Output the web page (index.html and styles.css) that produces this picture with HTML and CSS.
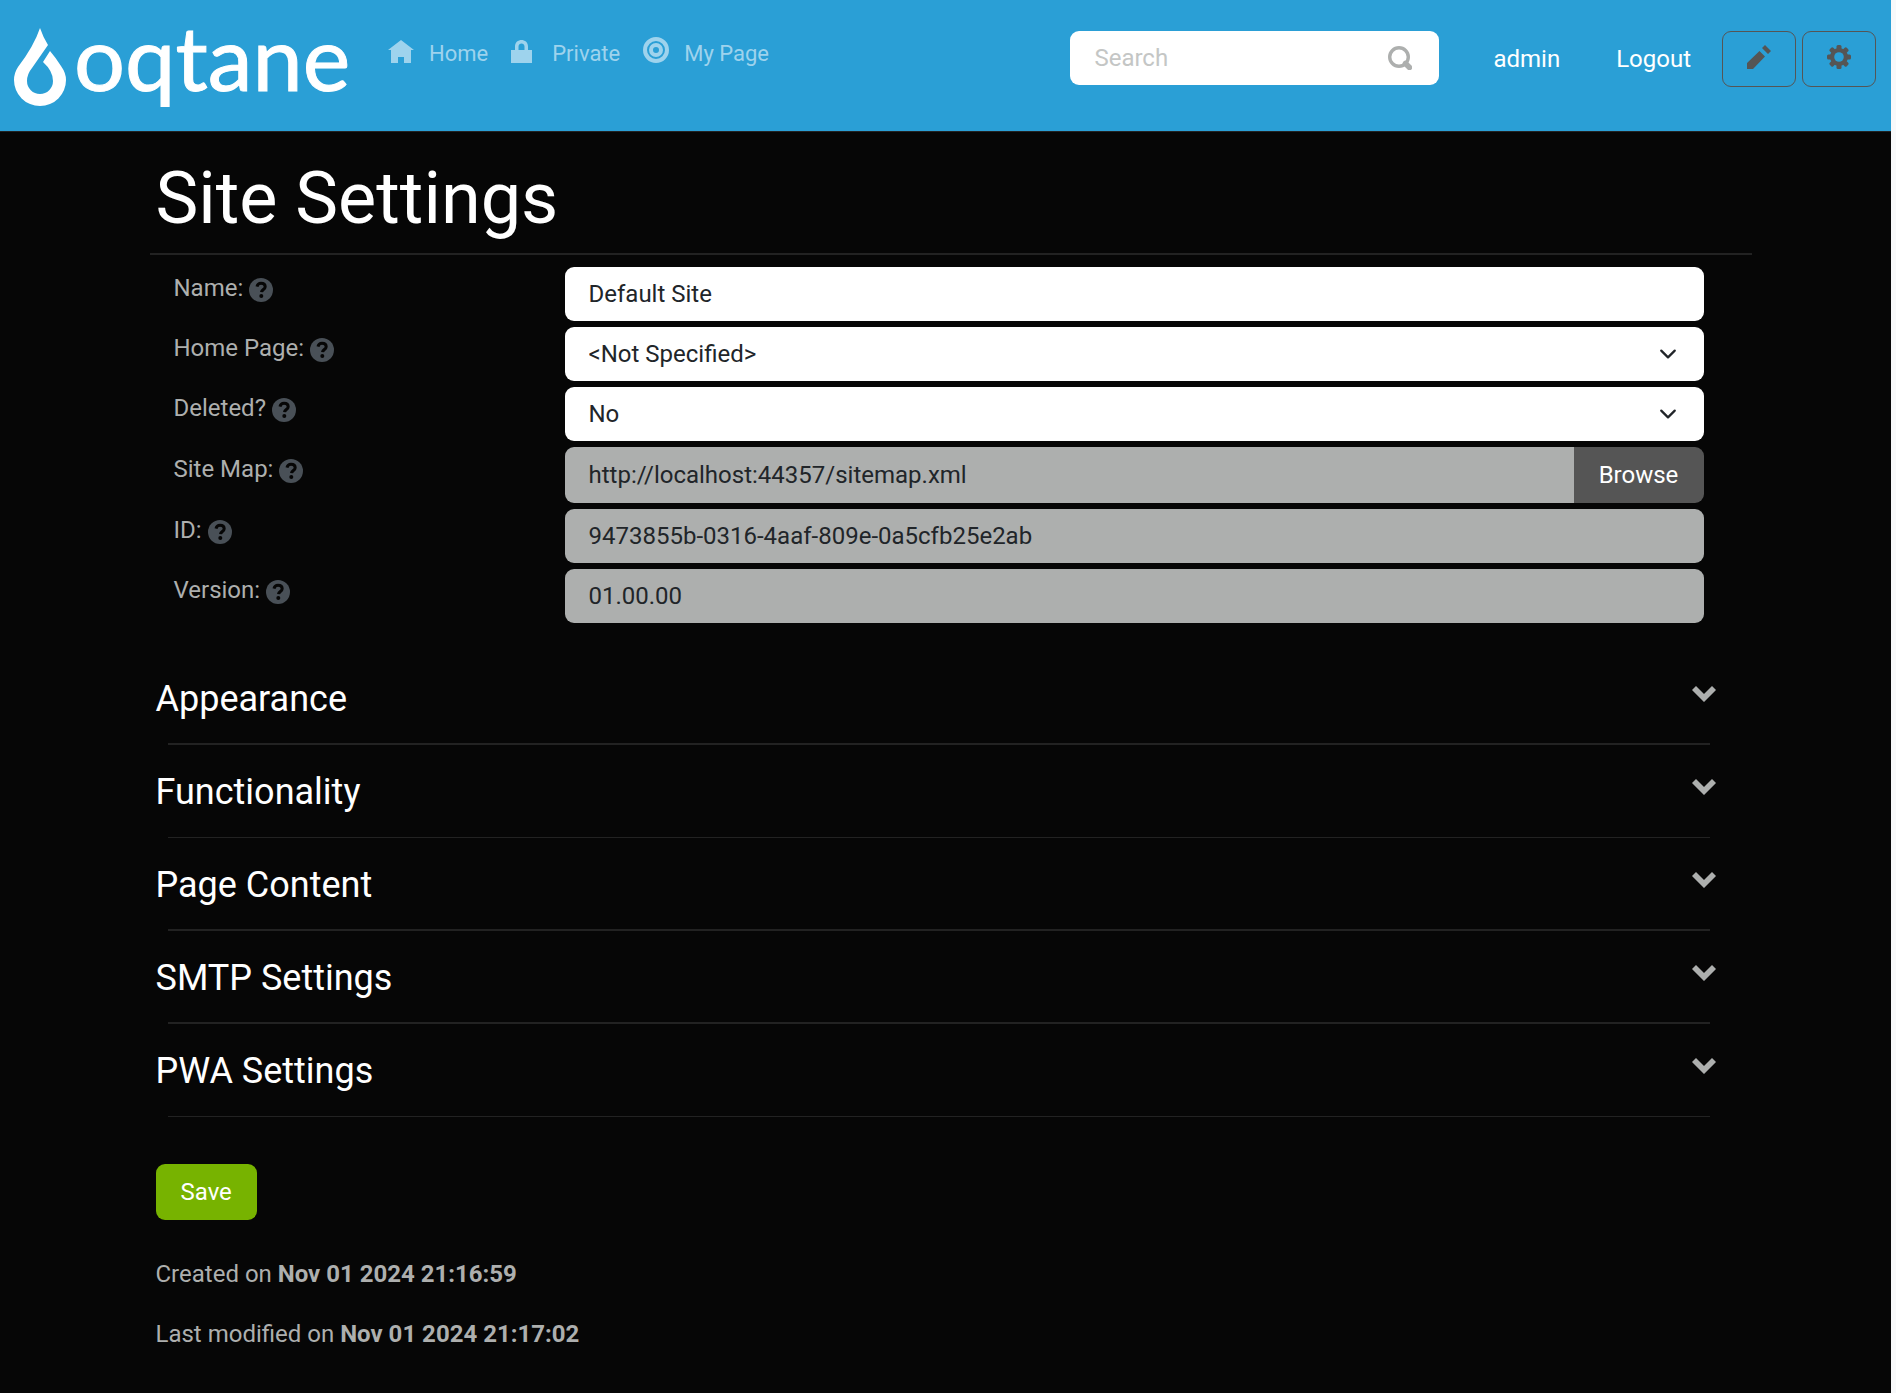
FILE: index.html
```html
<!DOCTYPE html>
<html lang="en">
<head>
<meta charset="utf-8">
<meta name="viewport" content="width=device-width, initial-scale=1">
<title>Site Settings - Default Site</title>
<link rel="stylesheet" href="styles.css">
</head>
<body>
<svg class="sprite" aria-hidden="true">
  <symbol id="help" viewBox="0 0 24 24"><circle cx="12" cy="12" r="12" fill="#495057"/><path d="M8 8.600C8.500 6.300 10 5.200 12 5.200c2.500 0 4.200 1.400 4.200 3.500 0 2.700-3.500 2.900-3.700 5.500" fill="none" stroke="#060606" stroke-width="3"/><circle cx="12.300" cy="18" r="2" fill="#060606"/></symbol>
  <symbol id="chevron" viewBox="0 0 24 24"><path d="M4 4l8 8 8-8 4 4-12 12L0 8z" fill="currentColor"/></symbol>
</svg>
<header class="topbar">
  <a class="brand" href="#" aria-label="oqtane">
    <svg class="drop" viewBox="0 0 52 80" aria-hidden="true"><path d="M26 1Q29 10 34 18L18 41Q13 47 13 54A13 13 0 0 0 39 54Q39 44 29 35L36 24Q42 31 47 39Q52 46 52 53A26 26 0 0 1 0 53Q0 46 4 40Q20 19 26 1z" fill="#fff"/></svg>
    <span class="wordmark">oqtane</span>
  </a>
  <nav class="menu">
    <a class="menu-link" href="#"><svg class="icon" viewBox="0 0 26 26"><path d="M13 3l13 10h-3v13h-7v-6h-6v6H3V13H0z" fill="currentColor"/></svg>Home</a>
    <a class="menu-link" href="#"><svg class="icon" viewBox="0 0 26 26"><path d="M0 13h4V9.500c0-8.600 13-8.600 13 0V13h4v13H0zM7.500 13h6V9.500c0-4-6-4-6 0z" fill="currentColor"/></svg>Private</a>
    <a class="menu-link" href="#"><svg class="icon" viewBox="0 0 26 26"><g fill="none" stroke="currentColor"><circle cx="13" cy="13" r="11" stroke-width="4"/><circle cx="13" cy="13" r="5" stroke-width="4"/></g></svg>My Page</a>
  </nav>
  <div class="tools">
    <form class="search">
      <input class="search-input" type="search" placeholder="Search" aria-label="Search">
      <button class="search-button" type="button" aria-label="Search"><svg class="icon-small" viewBox="0 0 24 24"><circle cx="11" cy="11" r="9.300" fill="none" stroke="currentColor" stroke-width="3.400"/><path d="M17.500 17.500l4 4" stroke="currentColor" stroke-width="5.500" stroke-linecap="round"/></svg></button>
    </form>
    <a class="user-link" href="#">admin</a>
    <button class="user-link" type="button">Logout</button>
    <div class="actions">
      <button class="action" type="button" aria-label="Edit page"><svg class="icon-small" viewBox="0 0 24 24"><path d="M14 6l4 4L6 24H0v-6zM18 0l6 6-3 3-6-6z" fill="none"/><path d="M12.500 6l5.500 5.500L6 24H0v-6zM18 0l6 6-3 3-6-6z" fill="currentColor"/></svg></button>
      <button class="action" type="button" aria-label="Control panel"><svg class="icon-small" viewBox="0 0 24 24"><g fill="currentColor"><g id="teeth"><rect x="9.500" width="5" height="24" rx="1.500"/><rect y="9.500" width="24" height="5" rx="1.500"/></g><use href="#teeth" transform="rotate(45 12 12)"/><circle cx="12" cy="12" r="9"/></g><circle cx="12" cy="12" r="4.800" fill="#2a9fd6"/></svg></button>
    </div>
  </div>
</header>
<div class="page">
<main class="content">
  <h1 class="title">Site Settings</h1>
  <form class="settings">
    <div class="row"><label class="label" for="name">Name: <svg class="help"><use href="#help"/></svg></label><input class="control" id="name" type="text" value="Default Site"></div>
    <div class="row"><label class="label" for="home">Home Page: <svg class="help"><use href="#help"/></svg></label><select class="control select" id="home"><option>&lt;Not Specified&gt;</option></select></div>
    <div class="row"><label class="label" for="deleted">Deleted? <svg class="help"><use href="#help"/></svg></label><select class="control select" id="deleted"><option>No</option><option>Yes</option></select></div>
    <div class="row"><label class="label" for="sitemap">Site Map: <svg class="help"><use href="#help"/></svg></label><div class="group"><input class="control" id="sitemap" type="text" value="http://localhost:44357/sitemap.xml" disabled><button class="browse" type="button">Browse</button></div></div>
    <div class="row"><label class="label" for="site-id">ID: <svg class="help"><use href="#help"/></svg></label><input class="control" id="site-id" type="text" value="9473855b-0316-4aaf-809e-0a5cfb25e2ab" disabled></div>
    <div class="row"><label class="label" for="version">Version: <svg class="help"><use href="#help"/></svg></label><input class="control" id="version" type="text" value="01.00.00" disabled></div>
  </form>
  <div class="sections">
    <section class="section"><h2 class="section-title">Appearance</h2><button class="toggle" type="button" aria-label="Expand Appearance"><svg class="icon-small"><use href="#chevron"/></svg></button></section>
    <section class="section"><h2 class="section-title">Functionality</h2><button class="toggle" type="button" aria-label="Expand Functionality"><svg class="icon-small"><use href="#chevron"/></svg></button></section>
    <section class="section"><h2 class="section-title">Page Content</h2><button class="toggle" type="button" aria-label="Expand Page Content"><svg class="icon-small"><use href="#chevron"/></svg></button></section>
    <section class="section"><h2 class="section-title">SMTP Settings</h2><button class="toggle" type="button" aria-label="Expand SMTP Settings"><svg class="icon-small"><use href="#chevron"/></svg></button></section>
    <section class="section"><h2 class="section-title">PWA Settings</h2><button class="toggle" type="button" aria-label="Expand PWA Settings"><svg class="icon-small"><use href="#chevron"/></svg></button></section>
  </div>
  <button class="save" type="button">Save</button>
  <p class="audit">Created on <b>Nov 01 2024 21:16:59</b></p>
  <p class="audit">Last modified on <b>Nov 01 2024 21:17:02</b></p>
</main>
</div>
</body>
</html>
```
FILE: styles.css
```css
* { box-sizing: border-box; }

body {
  margin: 0;
  min-height: 100vh;
  background: #060606;
  border-right: 5px solid #f8f9fa;
  color: #adafae;
  font: 24px/36px Roboto, "Liberation Sans", sans-serif;
}

a { color: inherit; text-decoration: none; }
button, input, select { font: inherit; }
button { cursor: pointer; }
.sprite { display: none; }

.topbar {
  display: flex;
  height: 132px;
  padding-right: 15px;
  background: #2a9fd6;
  border-bottom: 1px solid #222;
  color: #fff;
}

.brand { display: flex; flex: none; width: 348px; padding: 27px 0 0 14px; gap: 8px; }
.drop { flex: none; width: 52px; height: 80px; }
.wordmark {
  font-family: Lato, sans-serif;
  font-size: 90px;
  line-height: 58px;
  -webkit-text-stroke: 1px #fff;
}

.menu {
  display: flex;
  gap: 23px;
  padding: 37px 0 0 40px;
  color: #9ed3ed;
  font-size: 22px;
  line-height: 34px;
}
.menu-link { display: flex; height: 36px; gap: 15px; white-space: nowrap; }
.icon { width: 26px; height: 26px; }
.icon-small { display: block; width: 24px; height: 24px; }

.tools { display: flex; margin-left: auto; padding-top: 31px; align-items: flex-start; }
.search {
  display: flex;
  width: 369px;
  height: 54px;
  margin-right: 36px;
  background: #fff;
  border-radius: 9px;
}
.search-input {
  flex: 1;
  min-width: 0;
  padding: 0 0 0 24px;
  border: 0;
  background: none;
  color: #212529;
}
.search-input::placeholder { color: #c4c6c5; opacity: 1; }
.search-button { padding: 0 27px; border: 0; background: none; color: #adafae; }
.user-link { padding: 10px 18px; border: 0; background: none; color: #fff; }
.user-link + .user-link { margin-left: 20px; }
.actions { display: flex; gap: 6px; margin-left: 13px; }
.action {
  display: grid;
  place-items: center;
  width: 74px;
  height: 56px;
  padding: 0 0 4px;
  border: 1px solid #555;
  border-radius: 9px;
  background: none;
  color: #555;
}

.page { padding-left: 10px; }
.content { width: 1602px; max-width: 100%; margin: 0 auto; padding: 24px 6px 0; }
.title {
  margin: 0 -6px;
  padding: 0 6px 11px;
  border-bottom: 2px solid #222;
  color: #fff;
  font-size: 72px;
  font-weight: 400;
  line-height: 86px;
}

.settings { display: grid; gap: 6px; padding: 12px 42px 0 18px; }
.row { display: grid; grid-template-columns: 391px 1fr; align-items: center; }
.label { display: flex; align-items: center; gap: 6px; padding-bottom: 12px; }
.help { width: 24px; height: 24px; margin-top: 4px; }
.control {
  width: 100%;
  height: 54px;
  padding: 0 24px;
  border: 0;
  border-radius: 9px;
  background: #fff;
  color: #212529;
}
.control:disabled { background: #adafae; color: #212529; opacity: 1; }
.select {
  appearance: none;
  background: #fff url("data:image/svg+xml,%3Csvg xmlns='http://www.w3.org/2000/svg' viewBox='0 0 16 16'%3E%3Cpath fill='none' stroke='%23212529' stroke-linecap='round' stroke-linejoin='round' stroke-width='2' d='m2 5 6 6 6-6'/%3E%3C/svg%3E") no-repeat right 27px center / 18px 18px;
}
.group { display: flex; height: 56px; }
.group .control { flex: 1; height: 56px; border-radius: 9px 0 0 9px; }
.browse {
  width: 130px;
  border: 0;
  border-radius: 0 9px 9px 0;
  background: #555;
  color: #fff;
}

.sections { padding: 54px 30px 0 0; }
.section { position: relative; display: flex; justify-content: space-between; height: 93px; }
.section::after {
  content: "";
  position: absolute;
  inset: auto 6px 25px 12px;
  border-bottom: 2px solid #222;
}
.section:nth-child(3n + 2)::after { border-bottom-width: 1px; }
.section-title { margin: 0; color: #fff; font-size: 36px; font-weight: 400; line-height: 44px; }
.toggle { align-self: flex-start; padding: 5px 0; border: 0; background: none; color: #adafae; }

.save {
  display: block;
  height: 56px;
  margin: 22px 0 36px;
  padding: 0 25px;
  border: 0;
  border-radius: 9px;
  background: #77b300;
  color: #fff;
}
.audit { margin: 0 0 24px; }
```
